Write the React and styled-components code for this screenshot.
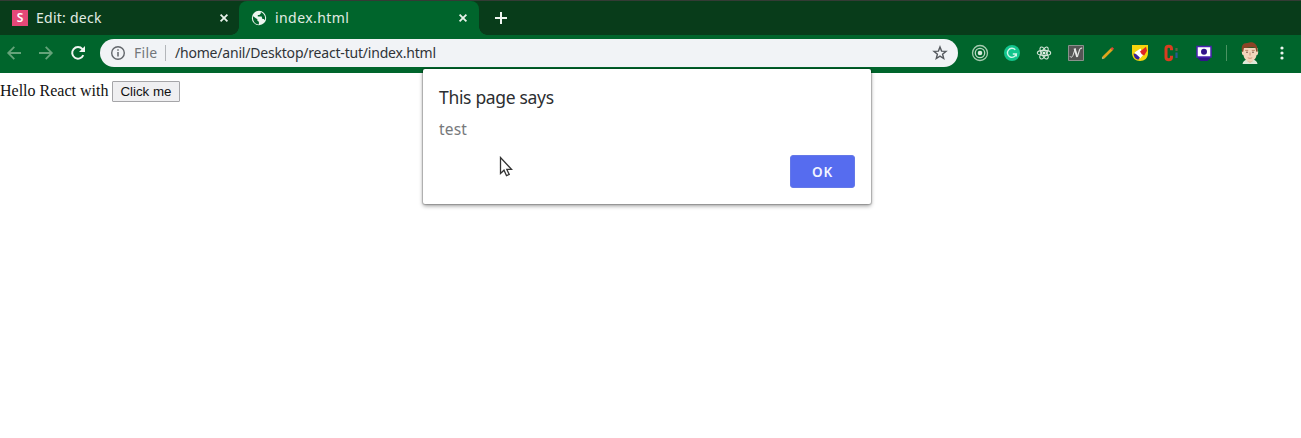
import React from "react";
import styled, { createGlobalStyle } from "styled-components";

const Global = createGlobalStyle`
  * { box-sizing: border-box; }
  body { margin: 0; background: #fff; overflow: hidden; }
  svg { display: block; flex: none; }
`;
const ui = `"Noto Sans", "Open Sans", sans-serif`;

const Browser = styled.div`
  position: relative;
  width: 1301px;
  height: 438px;
  overflow: hidden;
  display: flex;
  flex-direction: column;
  font-family: ${ui};
`;
const TabStrip = styled.div`
  height: 35px;
  flex: none;
  display: flex;
  background: #083c1a;
  border-top: 1px solid #343b35;
`;
const Tab = styled.div`
  position: relative;
  width: ${(p) => (p.$active ? 240 : 239)}px;
  height: 34px;
  padding: 0 ${(p) => (p.$active ? 11 : 10)}px 0 12px;
  display: flex;
  align-items: center;
  color: #e0ebe3;
  background: ${(p) => (p.$active ? "#00652c" : "transparent")};
  border-radius: 8px 8px 0 0;
  &::before, &::after {
    content: "";
    display: ${(p) => (p.$active ? "block" : "none")};
    position: absolute;
    bottom: 0;
    width: 8px;
    height: 8px;
  }
  &::before { left: -8px; background: radial-gradient(circle at 0 0, transparent 7.5px, #00652c 8px); }
  &::after { right: -8px; background: radial-gradient(circle at 100% 0, transparent 7.5px, #00652c 8px); }
`;
const TabTitle = styled.span`
  flex: 1;
  margin-left: 8px;
  font-size: 14px;
  line-height: 20px;
  letter-spacing: ${(p) => p.$track}px;
  white-space: nowrap;
`;
const Favicon = styled.span`
  width: 16px;
  height: 16px;
  background: #e54878;
  color: #fff;
  font-size: 12px;
  line-height: 16px;
  font-weight: 600;
  text-align: center;
`;
const NewTab = styled.div`
  padding: 11px 0 0 16px;
`;
const Toolbar = styled.div`
  height: 38px;
  flex: none;
  display: flex;
  align-items: center;
  background: #00652c;
  padding: 0 10px 2px 6px;
`;
const NavButtons = styled.div`
  display: flex;
  gap: 16px;
  width: 94px;
`;
const Omnibox = styled.div`
  width: 858px;
  flex: none;
  height: 28px;
  border-radius: 14px;
  background: #f1f3f6;
  display: flex;
  align-items: center;
  padding: 0 10px;
  font-size: 14px;
  line-height: 20px;
  white-space: nowrap;
`;
const Scheme = styled.span`
  width: 31px;
  margin-left: 8px;
  color: #73777b;
  letter-spacing: 0.25px;
`;
const Divider = styled.span`
  width: 1px;
  height: ${(p) => p.$height}px;
  background: ${(p) => p.$color};
`;
const Url = styled.span`
  flex: 1;
  margin-left: 9px;
  color: #303438;
  letter-spacing: -0.2px;
`;
const Extensions = styled.div`
  display: flex;
  align-items: center;
  gap: 14px;
  margin-left: 13px;
  width: 255px;
`;
const ProfileArea = styled.div`
  display: flex;
  align-items: center;
  gap: 12px;
`;
const Page = styled.main`
  flex: 1;
  display: flex;
  align-items: flex-start;
  padding-top: 8px;
  font: 16px/20px "Liberation Serif", serif;
  color: #111;
`;
const PageButton = styled.button`
  width: 68px;
  height: 21px;
  margin-left: 4px;
  padding: 0 1px 0 0;
  border: 1px solid #a5a5a8;
  border-radius: 1px;
  background: #efeff1;
  color: #111;
  font: 13.33px/18px "Liberation Sans", sans-serif;
`;
const Dialog = styled.section`
  position: absolute;
  left: 423px;
  top: 69px;
  width: 448px;
  height: 135px;
  padding: 16px;
  display: flex;
  flex-direction: column;
  background: #fff;
  border-radius: 2px;
  box-shadow: 0 0 1px 1px rgba(0,0,0,.2), 0 2px 4px rgba(0,0,0,.38);
`;
const DialogTitle = styled.h1`
  margin: 0;
  font-size: 17.5px;
  line-height: 25px;
  font-weight: 400;
  letter-spacing: -0.32px;
  color: #2c2e31;
`;
const Message = styled.p`
  margin: 9px 0 0;
  font-size: 15.5px;
  line-height: 20px;
  letter-spacing: 0.2px;
  color: #77797c;
`;
const OkButton = styled.button`
  align-self: flex-end;
  margin-top: 16px;
  width: 65px;
  height: 33px;
  flex: none;
  border: 1px solid #6478e8;
  border-radius: 3px;
  background: #566cef;
  color: #f2f5ff;
  font: 600 13.5px/20px ${ui};
  letter-spacing: 0.8px;
`;
const Pointer = styled.div`
  position: absolute;
  left: 499px;
  top: 156px;
`;

const Icon = ({ size = 18, children, view = 18 }) => (
  <svg width={size} height={size} viewBox={`0 0 ${view} ${view}`} fill="none">{children}</svg>
);
const Close = () => (
  <Icon size={10} view={10}><path d="M1.6 1.6l6.8 6.8M8.4 1.6l-6.8 6.8" stroke="#e8f2ea" strokeWidth="1.8" /></Icon>
);
const Globe = () => (
  <Icon size={16} view={16}>
    <circle cx="8" cy="8" r="7.2" fill="#edf5ef" />
    <path d="M2 6.2L6.4 9.2v1.6l1.500 1v2.700C4 14.500 1.400 11 2 6.200z" fill="#00652c" />
    <path d="M9.800 2v1.500L8.400 4.900H6.800v1.700h3.800l.8 2.500h1.500l1 1.200c.9-3.400-.6-6.800-4.100-8.300z" fill="#00652c" />
  </Icon>
);
const Arrow = ({ back }) => (
  <Icon size={16} view={16}>
    <path d={back ? "M15 8H2.500M8.300 1.900L2.200 8l6.100 6.100" : "M1 8h12.500M7.700 1.900L13.800 8l-6.100 6.100"} stroke="#65a37a" strokeWidth="1.8" />
  </Icon>
);
const Reload = () => (
  <Icon size={16} view={16}>
    <path d="M13.300 10.200A5.800 5.800 0 1 1 12.400 4.100L14 5.800" stroke="#f0f6f2" strokeWidth="2" />
    <path d="M15 1v6H9z" fill="#f0f6f2" />
  </Icon>
);

export default function App() {
  return (
    <Browser>
      <Global />
      <TabStrip>
        <Tab>
          <Favicon>S</Favicon>
          <TabTitle $track={0.25}>Edit: deck</TabTitle>
          <Close />
        </Tab>
        <Tab $active>
          <Globe />
          <TabTitle $track={0.42}>index.html</TabTitle>
          <Close />
        </Tab>
        <NewTab>
          <Icon size={12} view={12}><path d="M6 0v12M0 6h12" stroke="#f0f6f2" strokeWidth="2" /></Icon>
        </NewTab>
      </TabStrip>
      <Toolbar>
        <NavButtons><Arrow back /><Arrow /><Reload /></NavButtons>
        <Omnibox>
          <Icon size={16} view={16}>
            <circle cx="8" cy="8" r="6.3" stroke="#62666b" strokeWidth="1.4" />
            <path d="M8 7v4.500M8 4.300v1.500" stroke="#62666b" strokeWidth="1.5" />
          </Icon>
          <Scheme>File</Scheme>
          <Divider $height={16} $color="#b3b6ba" />
          <Url>/home/anil/Desktop/react-tut/index.html</Url>
          <Icon size={16} view={16}>
            <path d="M8 2l1.600 4.100 4.400.3-3.400 2.800 1.100 4.300L8 11.100l-3.700 2.400 1.100-4.300L2 6.400l4.400-.3z" stroke="#55595e" strokeWidth="1.4" />
          </Icon>
        </Omnibox>
        <Extensions>
          <Icon>
            <circle cx="9" cy="9" r="7.500" stroke="#a5cbb0" strokeWidth="1.300" />
            <circle cx="9" cy="9" r="4.700" stroke="#b9d8c2" strokeWidth="1.300" />
            <circle cx="9" cy="9" r="2.300" fill="#d5e8da" />
          </Icon>
          <Icon>
            <circle cx="9" cy="9" r="8" fill="#12c58d" />
            <path d="M12.300 5.800A4.500 4.500 0 1 0 13.300 10H9.800M13.300 10v2.500" stroke="#d2f7e9" strokeWidth="1.400" />
          </Icon>
          <Icon>
            <g stroke="#d3e6d8" strokeWidth="1.100">
              <ellipse cx="9" cy="9" rx="6.700" ry="2.600" />
              <ellipse cx="9" cy="9" rx="6.700" ry="2.600" transform="rotate(60 9 9)" />
              <ellipse cx="9" cy="9" rx="6.700" ry="2.600" transform="rotate(120 9 9)" />
            </g>
            <circle cx="9" cy="9" r="1.500" fill="#e4f0e6" />
          </Icon>
          <Icon>
            <path d="M1.500 1.500h15v15h-15z" fill="#555655" stroke="#8a918c" />
            <path d="M3 12.300c.8 1.700 2.300.8 2.900-.7L8.300 4.500" stroke="#e1e3e1" strokeWidth="1" />
            <path d="M7.600 4.500l2.600 8.500" stroke="#e8eae8" strokeWidth="2" />
            <path d="M10.300 13l2.200-7c.5-1.600 1.500-2.200 2.700-1.700" stroke="#e1e3e1" strokeWidth="1.100" />
          </Icon>
          <Icon>
            <path d="M4.200 13.800L12.800 5.200" stroke="#dfa51b" strokeWidth="2.700" />
            <path d="M12.500 5.500l1.600-1.600" stroke="#dd4b35" strokeWidth="2.700" />
            <path d="M3.300 14.700l1-1" stroke="#e8ca8d" strokeWidth="1.700" />
          </Icon>
          <Icon>
            <path d="M1 1h16v8c0 5-3.500 8-8 8s-8-3-8-8z" fill="#f4d60d" />
            <path d="M3.500 8.500l6-4 3 6-3.500 4z" fill="#fff" />
            <path d="M15 2.700l1 4-2.800 4.800-2.500-1.300L9 7.500z" fill="#df2525" />
            <path d="M2.500 9.500l2.700.8 3.600 3.200-1.500 2.200c-3-.7-4.500-2.700-4.800-6.200z" fill="#39209b" />
          </Icon>
          <Icon>
            <path d="M8.500 6.200V4.700C8.500 1.400 3 1.400 3 4.700v8.600c0 3.300 5.500 3.300 5.500 0v-1.500" stroke="#d83d20" strokeWidth="3" />
            <path d="M13.500 4v3" stroke="#5b6545" strokeWidth="2.200" />
            <path d="M13.500 8.500v5.500" stroke="#285a91" strokeWidth="2.200" />
          </Icon>
          <Icon>
            <path d="M3 13h12v1.500L12.500 17h-7L3 14.500z" fill="#32138a" />
            <path d="M2 2.500h14V13H2z" fill="#fff" stroke="#4b22b1" strokeWidth="1.500" />
            <circle cx="9" cy="7.700" r="3" fill="#32138a" />
          </Icon>
        </Extensions>
        <ProfileArea>
          <Divider $height={16} $color="#4b9363" />
          <svg width="22" height="24" viewBox="0 0 22 24">
            <path d="M3.500 23c.5-2.500 2-4 5-4.500h5c3 .5 4.500 2 5 4.500z" fill="#dfe7d9" />
            <path d="M8 17h6v3l-3 2-3-2z" fill="#e9bd9c" />
            <path d="M3.500 7h15v3.500h.8l-.5 3-1.300.7c-.8 4-3.300 6.200-6.500 6.200s-5.700-2.200-6.500-6.200l-1.300-.7-.5-3h.8z" fill="#f3d5bb" />
            <path d="M3.200 10.800C1.700 5 4 1.700 8.500 2c4-2 11-.6 9.800 8.800h-1l-.8-3.800C12.500 5.200 9 7.700 5 6.700l-.8 4.100z" fill="#8b4426" />
            <path d="M6.200 9.400h3M12.800 9.400h3" stroke="#ad7150" strokeWidth=".8" />
            <circle cx="8" cy="11.200" r=".8" fill="#66483c" /><circle cx="14" cy="11.200" r=".8" fill="#66483c" />
            <path d="M11 11.500v3M8.800 16.700c1.300.8 3.100.8 4.400 0" stroke="#c98d70" strokeWidth=".9" fill="none" />
          </svg>
          <Icon size={18}>
            <g fill="#edf5ef"><circle cx="9" cy="4" r="1.600" /><circle cx="9" cy="9" r="1.600" /><circle cx="9" cy="14" r="1.600" /></g>
          </Icon>
        </ProfileArea>
      </Toolbar>
      <Page>
        Hello React with
        <PageButton>Click me</PageButton>
      </Page>
      <Dialog>
        <DialogTitle>This page says</DialogTitle>
        <Message>test</Message>
        <OkButton>OK</OkButton>
      </Dialog>
      <Pointer>
        <svg width="14" height="22" viewBox="0 0 14 22">
          <path d="M1.500 1.500v16l3.500-3.300 2.500 5.500 2.700-1.200-2.400-5.200h4.700z" fill="#fff" stroke="#333" strokeWidth="1.300" />
        </svg>
      </Pointer>
    </Browser>
  );
}
